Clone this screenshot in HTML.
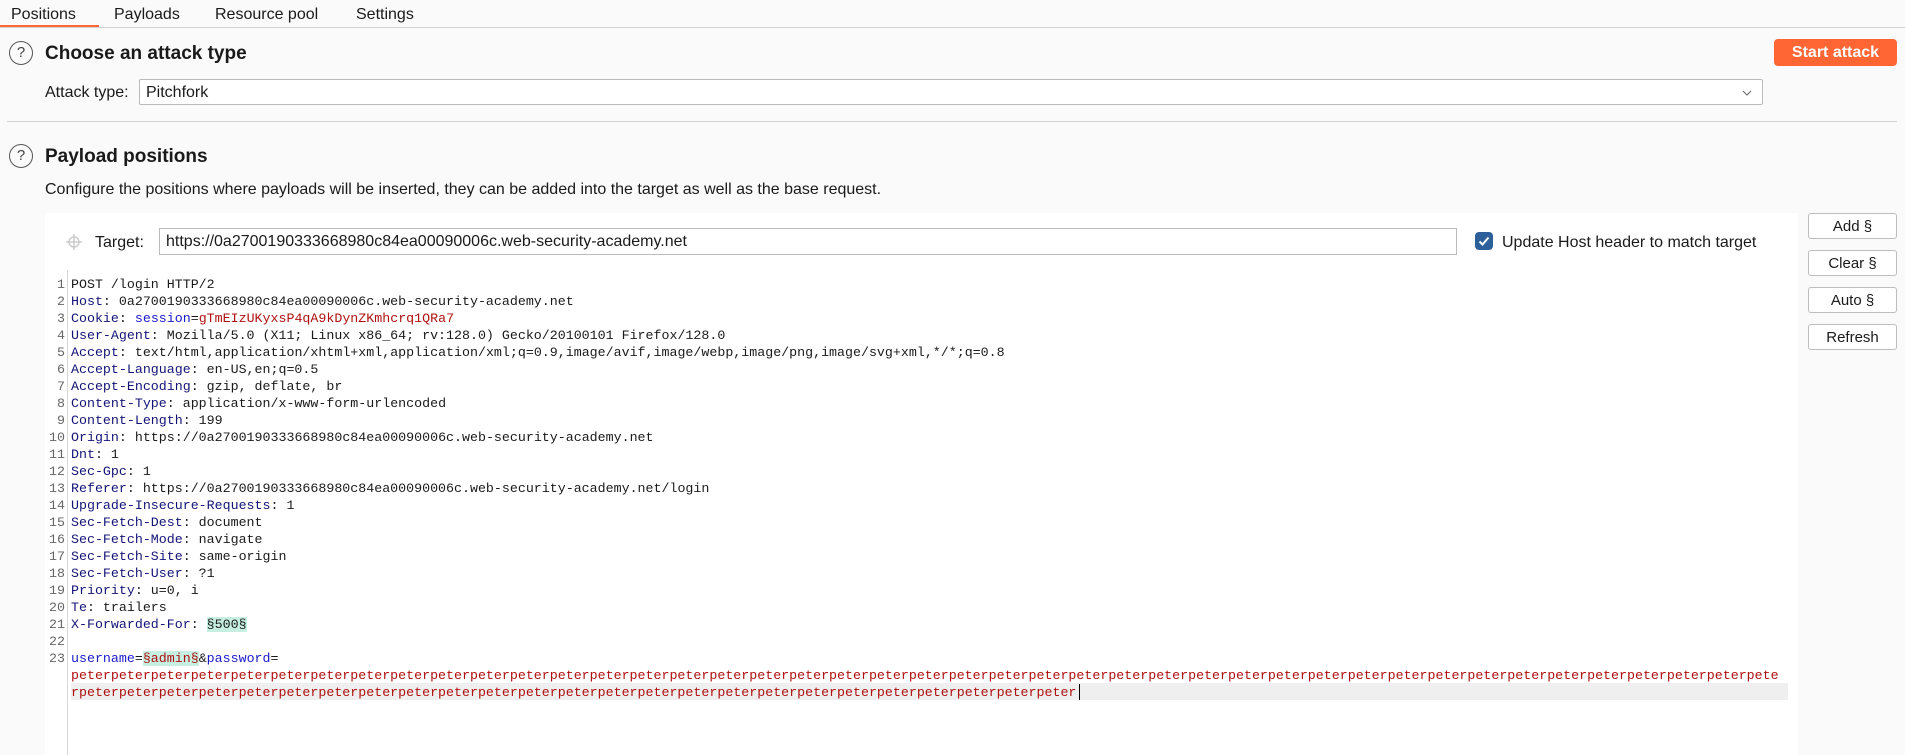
<!DOCTYPE html>
<html><head><meta charset="utf-8"><style>
*{margin:0;padding:0;box-sizing:border-box}
body{width:1905px;height:755px;overflow:hidden;background:#fafafa;font-family:"Liberation Sans",sans-serif;color:#1a1a1a;position:relative}
.a{position:absolute;white-space:nowrap}
.tab{font-size:16px;top:6px}
.h{font-size:19px;font-weight:bold}
.help{position:absolute;width:24px;height:24px;border:1.5px solid #555;border-radius:50%;font-size:15px;text-align:center;line-height:21px;color:#444}
.btn{position:absolute;left:1808px;width:89px;height:26px;border:1px solid #bdbdbd;border-radius:3px;background:#fff;font-size:15px;text-align:center;line-height:25px}
.code{position:absolute;left:45px;top:270px;width:1753px;height:485px;background:#fff}
.ln{position:absolute;left:0;width:20px;text-align:right;color:#666}
.cl{font-family:"Liberation Mono",monospace;font-size:13.3px;line-height:17px;height:17px;position:absolute;white-space:pre}
.k{color:#141478}.r{color:#b01010}.b{color:#1a1acc}.m{background:#c6efe2}
</style></head><body>
<div class="a tab" style="left:11px">Positions</div>
<div class="a tab" style="left:114px">Payloads</div>
<div class="a tab" style="left:215px">Resource pool</div>
<div class="a tab" style="left:356px">Settings</div>
<div class="a" style="left:0;top:27px;width:1905px;height:1px;background:#d0d0d0"></div>
<div class="a" style="left:0;top:25px;width:99px;height:2px;background:#ff6633"></div>

<div class="help" style="left:9px;top:41px">?</div>
<div class="a h" style="left:45px;top:43px">Choose an attack type</div>
<div class="a" style="left:1774px;top:39px;width:123px;height:27px;background:#ff6633;border-radius:4px;color:#fff;font-size:16px;font-weight:bold;text-align:center;line-height:28px">Start attack</div>
<div class="a" style="left:45px;top:84px;font-size:16px">Attack type:</div>
<div class="a" style="left:139px;top:79px;width:1624px;height:26px;border:1px solid #bbb;border-radius:2px;background:#fff;font-size:16px;padding-left:6px;line-height:26px">Pitchfork
<svg style="position:absolute;right:10px;top:10px" width="10" height="6"><path d="M1 1L5 5L9 1" fill="none" stroke="#666" stroke-width="1"/></svg></div>
<div class="a" style="left:7px;top:121px;width:1890px;height:1px;background:#d4d4d4"></div>

<div class="help" style="left:9px;top:144px">?</div>
<div class="a h" style="left:45px;top:146px">Payload positions</div>
<div class="a" style="left:45px;top:181px;font-size:16px">Configure the positions where payloads will be inserted, they can be added into the target as well as the base request.</div>

<div class="a" style="left:45px;top:213px;width:1753px;height:57px;background:#fff"></div>
<svg class="a" style="left:66px;top:234px" width="16" height="16"><circle cx="8" cy="8" r="5" fill="none" stroke="#ccc" stroke-width="1.5"/><path d="M8 0V16M0 8H16" stroke="#ccc" stroke-width="1.5"/></svg>
<div class="a" style="left:95px;top:234px;font-size:16px">Target:</div>
<div class="a" style="left:159px;top:228px;width:1298px;height:27px;border:1px solid #bbb;background:#fff;font-size:16px;padding-left:6px;line-height:26px">https://0a2700190333668980c84ea00090006c.web-security-academy.net</div>
<div class="a" style="left:1475px;top:232px;width:18px;height:18px;background:#2d5f9a;border-radius:4px"><svg width="18" height="18"><path d="M4.5 9.5L7.5 12.5L13.5 5.5" fill="none" stroke="#fff" stroke-width="2"/></svg></div>
<div class="a" style="left:1502px;top:234px;font-size:16px">Update Host header to match target</div>

<div class="btn" style="top:213px">Add §</div>
<div class="btn" style="top:250px">Clear §</div>
<div class="btn" style="top:287px">Auto §</div>
<div class="btn" style="top:324px">Refresh</div>

<div class="code">
<div style="position:absolute;left:22px;top:0;width:1px;height:485px;background:#d8d8d8"></div>
<div style="position:absolute;left:26px;top:413px;width:1717px;height:17px;background:#efefef"></div>
<div style="position:absolute;left:1034px;top:414px;width:1px;height:16px;background:#000"></div>
</div>
<div id="c" style="position:absolute;left:45px;top:276px"></div>
<script>
var L=[
'POST /login HTTP/2',
'<span class="k">Host</span>: 0a2700190333668980c84ea00090006c.web-security-academy.net',
'<span class="k">Cookie</span>: <span class="b">session</span>=<span class="r">gTmEIzUKyxsP4qA9kDynZKmhcrq1QRa7</span>',
'<span class="k">User-Agent</span>: Mozilla/5.0 (X11; Linux x86_64; rv:128.0) Gecko/20100101 Firefox/128.0',
'<span class="k">Accept</span>: text/html,application/xhtml+xml,application/xml;q=0.9,image/avif,image/webp,image/png,image/svg+xml,*/*;q=0.8',
'<span class="k">Accept-Language</span>: en-US,en;q=0.5',
'<span class="k">Accept-Encoding</span>: gzip, deflate, br',
'<span class="k">Content-Type</span>: application/x-www-form-urlencoded',
'<span class="k">Content-Length</span>: 199',
'<span class="k">Origin</span>: https://0a2700190333668980c84ea00090006c.web-security-academy.net',
'<span class="k">Dnt</span>: 1',
'<span class="k">Sec-Gpc</span>: 1',
'<span class="k">Referer</span>: https://0a2700190333668980c84ea00090006c.web-security-academy.net/login',
'<span class="k">Upgrade-Insecure-Requests</span>: 1',
'<span class="k">Sec-Fetch-Dest</span>: document',
'<span class="k">Sec-Fetch-Mode</span>: navigate',
'<span class="k">Sec-Fetch-Site</span>: same-origin',
'<span class="k">Sec-Fetch-User</span>: ?1',
'<span class="k">Priority</span>: u=0, i',
'<span class="k">Te</span>: trailers',
'<span class="k">X-Forwarded-For</span>: <span class="m">§500§</span>',
'',
'<span class="b">username</span>=<span class="m r">§admin§</span>&amp;<span class="b">password</span>='
];
var h='';
for(var i=0;i<L.length;i++){h+='<div class="cl ln" style="top:'+(i*17)+'px">'+(i+1)+'</div><div class="cl" style="left:26px;top:'+(i*17)+'px">'+L[i]+'</div>';}
var p1='peter'.repeat(42)+'pete',p2='r'+'peter'.repeat(25);
h+='<div class="cl r" style="left:26px;top:'+(23*17)+'px">'+p1+'</div><div class="cl r" style="left:26px;top:'+(24*17)+'px">'+p2+'</div>';
document.getElementById('c').innerHTML=h;
</script>
</body></html>
